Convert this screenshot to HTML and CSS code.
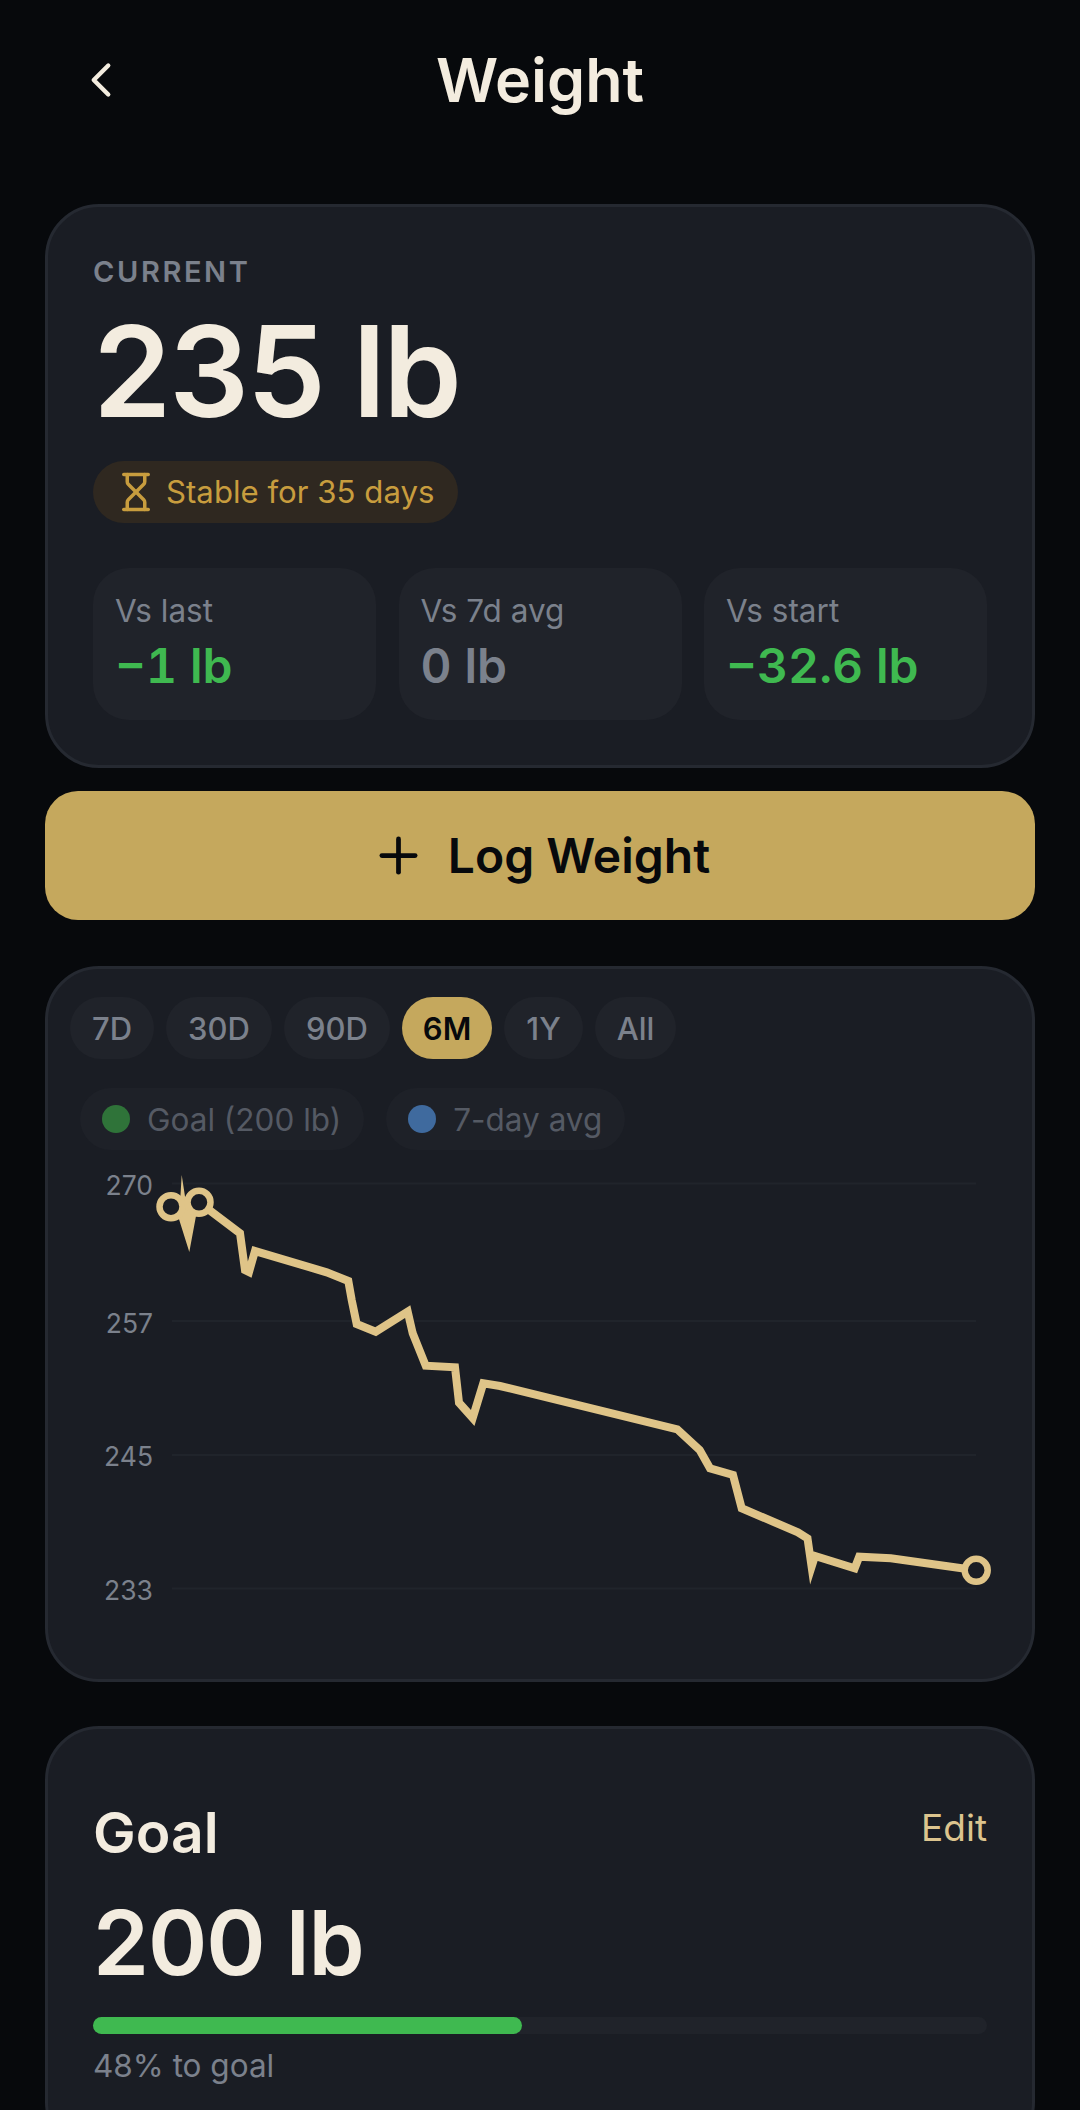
FILE: index.html
```html
<!DOCTYPE html>
<html lang="en">
<head>
    <meta charset="UTF-8">
    <meta name="viewport" content="width=device-width, initial-scale=1.0">
    <title>Weight</title>
    <link rel="stylesheet" href="styles.css">
</head>
<body>
<div class="screen">
    <header class="topbar">
        <button class="back" aria-label="Back">
            <svg viewBox="0 0 24 24" width="58" height="58"><path d="m15 18-6-6 6-6"/></svg>
        </button>
        <h1>Weight</h1>
    </header>

    <section class="card current">
        <div class="eyebrow">CURRENT</div>
        <div class="big-value">235 lb</div>
        <div class="badge">
            <svg viewBox="0 0 24 24" width="42" height="42">
                <path d="M5 22h14"/>
                <path d="M5 2h14"/>
                <path d="M17 22v-4.172a2 2 0 0 0-.586-1.414L12 12l-4.414 4.414A2 2 0 0 0 7 17.828V22"/>
                <path d="M7 2v4.172a2 2 0 0 0 .586 1.414L12 12l4.414-4.414A2 2 0 0 0 17 6.172V2"/>
            </svg>
            <span>Stable for 35 days</span>
        </div>
        <div class="stats">
            <div class="stat">
                <div class="stat-label">Vs last</div>
                <div class="stat-value good">−1 lb</div>
            </div>
            <div class="stat">
                <div class="stat-label">Vs 7d avg</div>
                <div class="stat-value">0 lb</div>
            </div>
            <div class="stat">
                <div class="stat-label">Vs start</div>
                <div class="stat-value good">−32.6 lb</div>
            </div>
        </div>
    </section>

    <button class="log-btn">
        <svg viewBox="0 0 24 24" width="57" height="57"><path d="M5 12h14"/><path d="M12 5v14"/></svg>
        <span>Log Weight</span>
    </button>

    <section class="card chart-card">
        <div class="ranges">
            <span class="range">7D</span>
            <span class="range">30D</span>
            <span class="range">90D</span>
            <span class="range active">6M</span>
            <span class="range">1Y</span>
            <span class="range">All</span>
        </div>
        <div class="legend">
            <span class="legend-item"><i class="dot dot-goal"></i>Goal (200 lb)</span>
            <span class="legend-item"><i class="dot dot-avg"></i>7-day avg</span>
        </div>
        <svg class="chart" viewBox="70 1160 940 470" width="940" height="470">
            <g class="grid">
                <path d="M172 1183.5H976"/>
                <path d="M172 1321H976"/>
                <path d="M172 1455H976"/>
                <path d="M172 1588.5H976"/>
            </g>
            <g class="axis">
                <text x="153" y="1195">270</text>
                <text x="153" y="1333">257</text>
                <text x="153" y="1466">245</text>
                <text x="153" y="1600">233</text>
            </g>
            <polygon class="spike" points="181.7,1175 186,1203 196,1216 189.3,1252 178,1216 180,1203"/>
            <polyline class="line" points="199,1202.3 240,1233.3 245,1270 249,1272 255,1251 326.7,1272.3 348.3,1281 351.7,1300 356.7,1324 375.7,1331.7 407.7,1311.7 412.7,1333.3 425.7,1365.7 455,1367.3 459,1402.7 472.7,1418 483.3,1383.3 500,1386 677.3,1429.3 699.7,1450 710,1468.3 733,1475 741.7,1508.3 797.9,1532.3 807.5,1538.3 811.6,1566.7 815,1556 854.7,1568.3 859.2,1556.7 890.8,1558.3 976,1570.3"/>
            <circle class="pt" cx="171" cy="1206.7" r="11.5"/>
            <circle class="pt" cx="199" cy="1202.3" r="11.5"/>
            <circle class="pt" cx="976.2" cy="1570.3" r="11.5"/>
        </svg>
    </section>

    <section class="card goal">
        <div class="goal-head">
            <h2>Goal</h2>
            <a class="edit">Edit</a>
        </div>
        <div class="goal-value">200 lb</div>
        <div class="progress"><div class="progress-fill" style="width: 48%"></div></div>
        <div class="progress-text">48% to goal</div>
    </section>
</div>
</body>
</html>
```

FILE: styles.css
```css
:root {
    --bg: #07090c;
    --card: #1a1d24;
    --card-border: #252931;
    --tile: #20232a;
    --cream: #f3ecdf;
    --gold: #c5a85d;
    --line: #dfc488;
    --muted: #7b818c;
    --green: #3fb950;
}
* {
    box-sizing: border-box;
}
html, body {
    margin: 0;
    height: 2110px;
    overflow: hidden;
}
body {
    background-color: var(--bg);
    font-family: Inter, "Liberation Sans", sans-serif;
    color: var(--cream);
}
svg {
    display: block;
    fill: none;
    stroke: currentColor;
    stroke-linecap: round;
    stroke-linejoin: round;
}
.screen {
    padding: 0 45px;
}
.topbar {
    position: relative;
    height: 160px;
    margin-bottom: 44px;
    display: flex;
    align-items: center;
    justify-content: center;
}
.topbar h1 {
    margin: 0;
    font-size: 61px;
    line-height: 72px;
    font-weight: 600;
}
.back {
    position: absolute;
    left: 27px;
    top: 51px;
    padding: 0;
    border: 0;
    background: none;
    color: var(--cream);
}
.back svg {
    stroke-width: 1.8;
}
.card {
    background-color: var(--card);
    border: 3px solid var(--card-border);
    border-radius: 54px;
}
.current {
    height: 564px;
    padding: 47px 45px 0;
}
.eyebrow {
    font-size: 29px;
    line-height: 36px;
    font-weight: 600;
    letter-spacing: 2.6px;
    color: var(--muted);
}
.big-value {
    margin-top: 18px;
    font-size: 126px;
    line-height: 126px;
    font-weight: 600;
    letter-spacing: -2.5px;
}
.badge {
    display: inline-flex;
    align-items: center;
    gap: 9px;
    height: 62px;
    margin-top: 27px;
    padding: 0 24px 0 22px;
    border-radius: 31px;
    background-color: #2f2820;
    color: #c89d3e;
    font-size: 31.2px;
    vertical-align: top;
}
.badge svg {
    stroke-width: 2;
}
.stats {
    display: grid;
    grid-template-columns: repeat(3, 1fr);
    gap: 22.5px;
    margin-top: 45px;
}
.stat {
    height: 152px;
    padding: 23px 22px 0;
    border-radius: 36px;
    background-color: var(--tile);
}
.stat-label {
    font-size: 31.5px;
    line-height: 40px;
    color: var(--muted);
}
.stat-value {
    margin-top: 7px;
    font-size: 48px;
    line-height: 56px;
    font-weight: 600;
    font-variant-numeric: tabular-nums;
    color: var(--muted);
}
.stat-value.good {
    color: var(--green);
}
.log-btn {
    display: flex;
    align-items: center;
    justify-content: center;
    gap: 21px;
    width: 100%;
    height: 129px;
    margin-top: 23px;
    border: 0;
    border-radius: 33px;
    background-color: var(--gold);
    color: #07090c;
    font-family: inherit;
    font-size: 48px;
    font-weight: 600;
}
.log-btn svg {
    stroke-width: 2;
}
.chart-card {
    height: 716px;
    margin-top: 46px;
    padding: 28px 22px 0;
}
.ranges {
    display: flex;
    gap: 12px;
}
.range {
    display: flex;
    align-items: center;
    height: 62px;
    padding: 0 22px;
    border-radius: 31px;
    background-color: var(--tile);
    color: var(--muted);
    font-size: 31px;
    font-weight: 500;
}
.range.active {
    padding: 0 21px;
    background-color: var(--gold);
    color: #07090c;
    font-weight: 600;
}
.legend {
    display: flex;
    gap: 22px;
    margin: 29px 0 0 10px;
}
.legend-item {
    display: flex;
    align-items: center;
    gap: 17px;
    height: 62px;
    padding: 0 23px 0 22px;
    border-radius: 31px;
    background-color: #1e2128;
    color: #555a64;
    font-size: 31.5px;
}
.dot {
    width: 28px;
    height: 28px;
    border-radius: 50%;
}
.dot-goal {
    background-color: #2f7339;
}
.dot-avg {
    background-color: #3f6a9e;
}
.chart {
    margin-top: 10px;
}
.grid path {
    stroke: #20242b;
    stroke-width: 2;
    stroke-linecap: butt;
}
.axis text {
    fill: var(--muted);
    stroke: none;
    font-size: 26.5px;
    text-anchor: end;
}
.spike {
    fill: var(--line);
    stroke: none;
}
.line {
    stroke: var(--line);
    stroke-width: 8;
    stroke-linecap: butt;
    stroke-linejoin: miter;
    stroke-miterlimit: 8;
}
.pt {
    fill: var(--card);
    stroke: var(--line);
    stroke-width: 6.5;
}
.goal {
    height: 430px;
    margin-top: 44px;
    padding: 72px 45px 0;
}
.goal-head {
    display: flex;
    justify-content: space-between;
    align-items: flex-start;
}
.goal-head h2 {
    margin: 0;
    font-size: 57px;
    line-height: 64px;
    font-weight: 600;
}
.edit {
    margin-top: 5px;
    font-size: 37px;
    line-height: 44px;
    color: #dcc48e;
}
.goal-value {
    margin-top: 28px;
    font-size: 90px;
    line-height: 100px;
    font-weight: 600;
    letter-spacing: -1.1px;
}
.progress {
    height: 17px;
    margin-top: 24px;
    border-radius: 9px;
    background-color: var(--tile);
}
.progress-fill {
    height: 100%;
    border-radius: 9px;
    background-color: var(--green);
}
.progress-text {
    margin-top: 13px;
    font-size: 31.5px;
    line-height: 38px;
    color: var(--muted);
}
```
